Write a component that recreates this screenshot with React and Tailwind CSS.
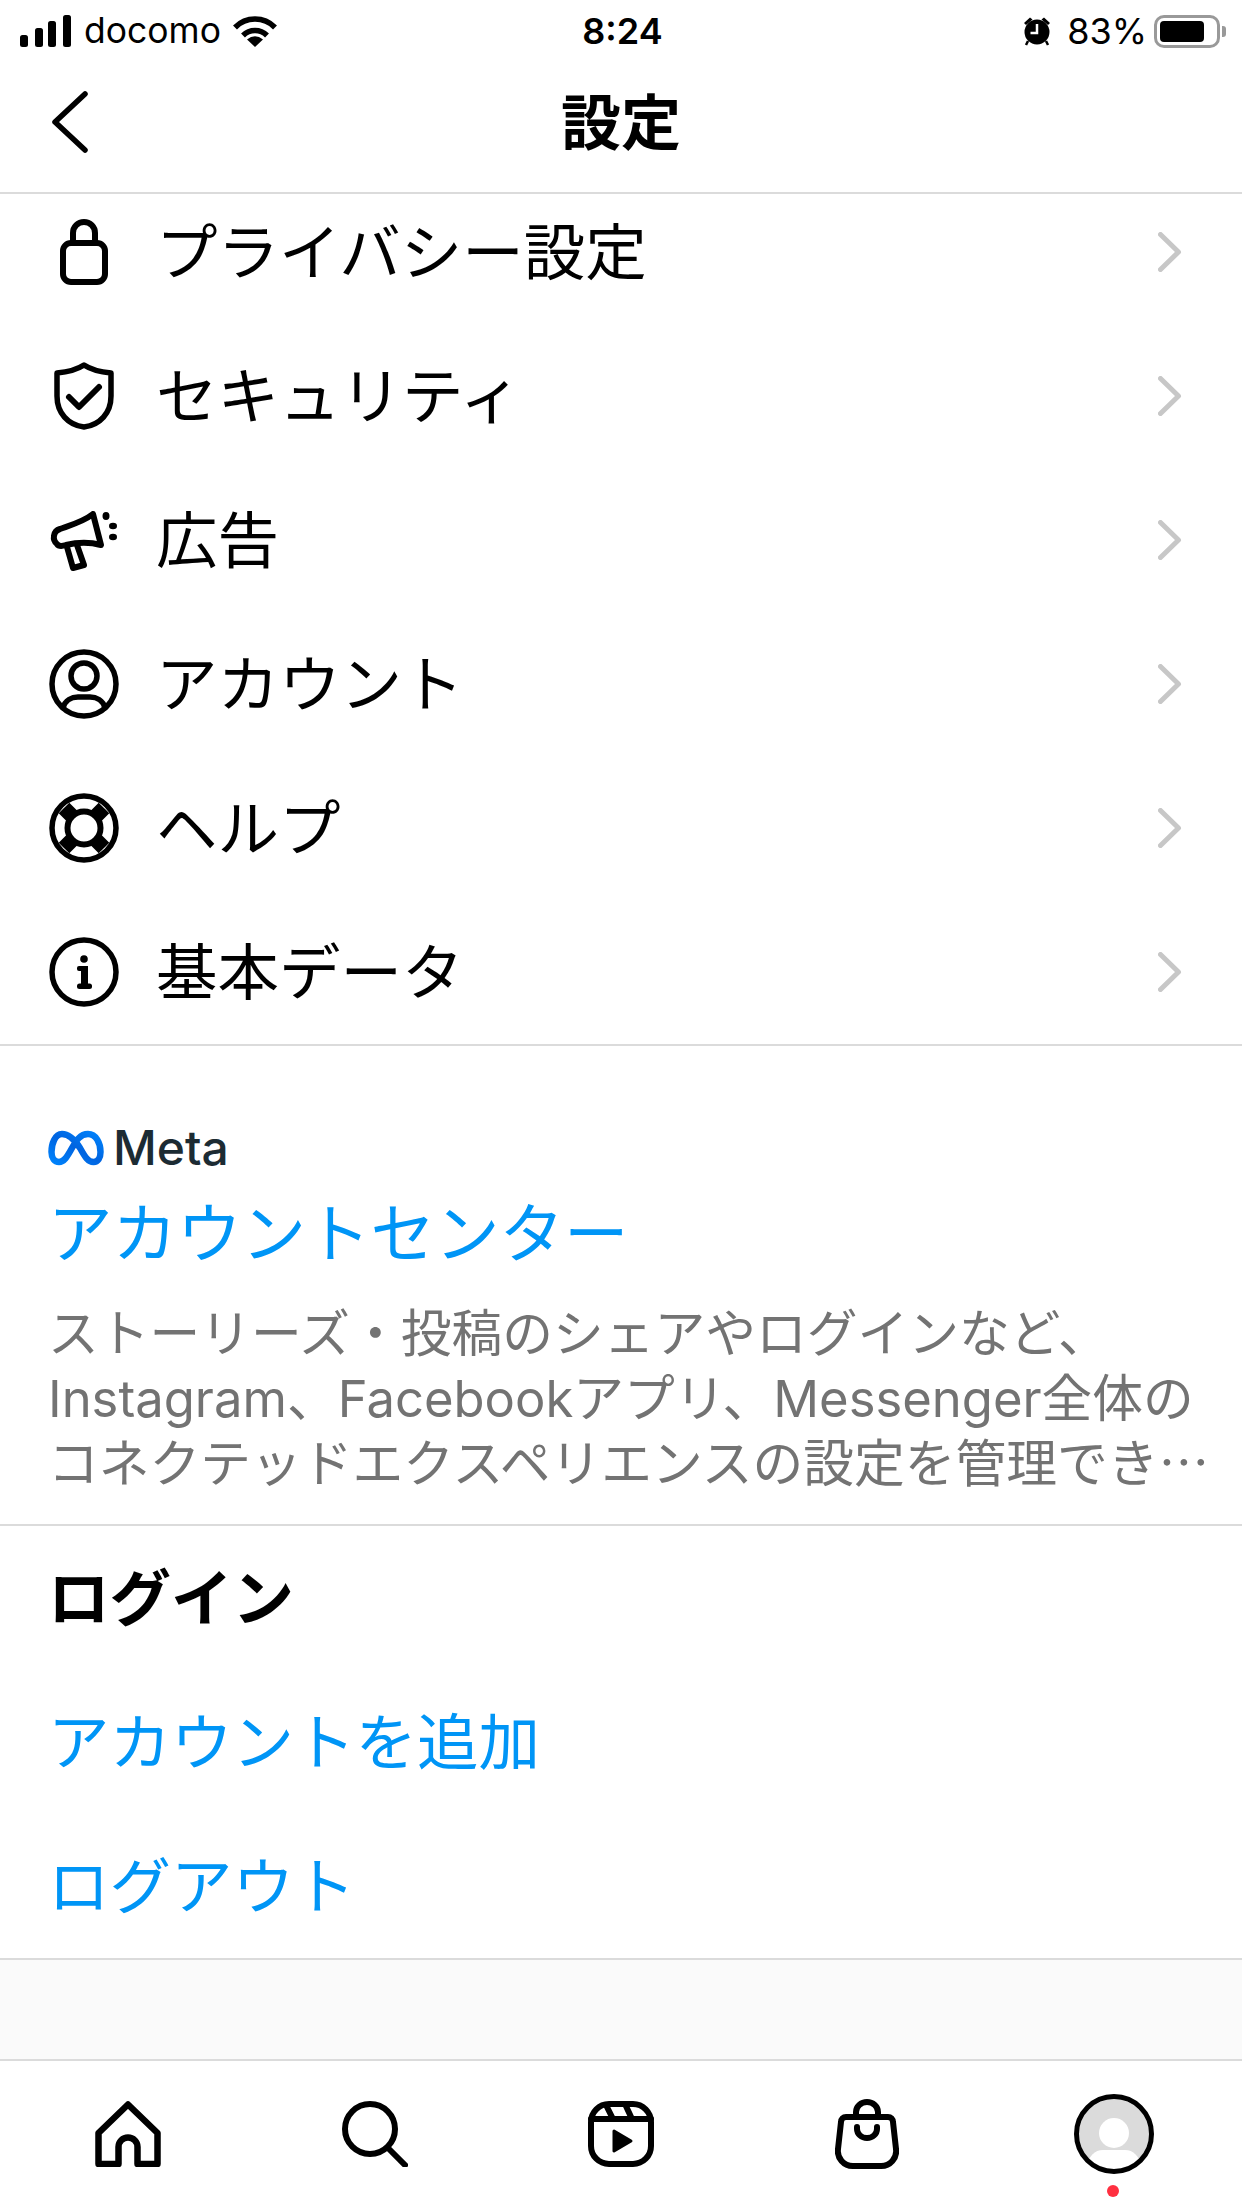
const Stroke = ({ size = 72, h, children, sw = 5.5 }) => (
  <svg width={size} height={h || size} viewBox={`0 0 ${size} ${h || size}`} fill="none" stroke="#000" strokeWidth={sw} strokeLinecap="round" strokeLinejoin="round">
    {children}
  </svg>
);

const LockIcon = () => (
  <Stroke sw={6}>
    <rect x="15" y="27" width="42" height="39" rx="8" />
    <path d="M25 27V17a11 11 0 0 1 22 0V27" />
  </Stroke>
);
const ShieldIcon = () => (
  <Stroke>
    <path d="M36 5C42 9 52 12 63 13V36C63 53 52 65 36 67C20 65 9 53 9 36V13C20 12 30 9 36 5Z" />
    <path d="M21 37L31 47L51 27" strokeWidth="6" />
  </Stroke>
);
const AdIcon = () => (
  <Stroke sw={6}>
    <path d="M45 10C35 18 20 22 12 25C5 27 4 36 9 40C11 43 15 42 18 41C30 38 42 38 53 41Z" />
    <path d="M19 43L25 64L36 61L29 41" />
    <g fill="#000" stroke="none">
      <ellipse cx="58" cy="12" rx="3.5" ry="4" />
      <ellipse cx="65" cy="22" rx="4" ry="3.2" />
      <ellipse cx="65" cy="33" rx="4" ry="3.2" />
    </g>
  </Stroke>
);
const AccountIcon = () => (
  <Stroke>
    <circle cx="36" cy="36" r="32" />
    <circle cx="36" cy="28" r="13" />
    <path d="M15 60C17 52 24 49 30 49H42C48 49 55 52 57 60" />
  </Stroke>
);
const HelpIcon = () => (
  <Stroke>
    <circle cx="36" cy="36" r="32" />
    <path d="M16 16L56 56M56 16L16 56" strokeWidth="15" strokeLinecap="butt" />
    <circle cx="36" cy="36" r="16.5" fill="#fff" strokeWidth="6" />
  </Stroke>
);
const InfoIcon = () => (
  <Stroke>
    <circle cx="36" cy="36" r="32" />
    <g fill="#000" stroke="none">
      <circle cx="36" cy="23" r="3.8" />
      <rect x="29" y="30" width="11" height="5" rx="2" />
      <rect x="33" y="30" width="7" height="22" />
      <rect x="29" y="47.5" width="15" height="5.5" rx="2.5" />
    </g>
  </Stroke>
);

const Chevron = () => (
  <svg width="24" height="40" viewBox="0 0 24 40" fill="none" stroke="#c7c7c7" strokeWidth="5" strokeLinecap="round" strokeLinejoin="round">
    <path d="M2.5 2.5L20.5 20L2.5 37.5" />
  </svg>
);

const rows = [
  ["プライバシー設定", LockIcon],
  ["セキュリティ", ShieldIcon],
  ["広告", AdIcon],
  ["アカウント", AccountIcon],
  ["ヘルプ", HelpIcon],
  ["基本データ", InfoIcon],
];

const StatusBar = () => (
  <div className="h-[60px] pt-[2px] flex items-center relative text-[36px] leading-none text-black pl-[20px] pr-[16px]" style={{ fontFamily: "Inter, sans-serif" }}>
    <div className="flex items-center flex-1">
      <svg width="52" height="32" viewBox="0 0 52 32" fill="#000">
        <rect x="0" y="20" width="8" height="12" rx="2.5" />
        <rect x="15" y="13" width="8" height="19" rx="2.5" />
        <rect x="28" y="6" width="8" height="26" rx="2.5" />
        <rect x="43" y="0" width="8" height="32" rx="2.5" />
      </svg>
      <span className="ml-[12px] text-[35.5px]">docomo</span>
      <svg className="ml-[11px]" width="46" height="34" viewBox="0 0 46 34" fill="none" stroke="#000" strokeWidth="5.5">
        <path d="M3 13.5A28 28 0 0 1 43 13.5" />
        <path d="M11 21.5A17 17 0 0 1 35 21.5" />
        <path d="M23 33L15 25.5Q23 19 31 25.5Z" fill="#000" stroke="none" />
      </svg>
    </div>
    <span className="font-semibold text-[36px] w-[110px] text-center -ml-[1px]">8:24</span>
    <div className="flex items-center flex-1 justify-end">
      <svg width="30" height="32" viewBox="0 0 30 32" fill="#000">
        <circle cx="15" cy="17" r="12.5" />
        <path d="M2 8L8 2.5L10.5 4.5L4 10Z M28 8L22 2.5L19.5 4.5L26 10Z" />
        <path d="M6 26L4 30M24 26L26 30" stroke="#000" strokeWidth="2.5" />
        <path d="M15 9V18H8.5" stroke="#fff" strokeWidth="2.5" fill="none" />
      </svg>
      <span className="ml-[15px]">83%</span>
      <div className="ml-[7px] w-[66px] h-[33px] rounded-[10px] border-[3px] border-[#999999] p-[3px] flex">
        <div className="w-[44px] bg-black rounded-[4px]" />
      </div>
      <div className="ml-[2px] w-[4px] h-[11px] bg-[#999999] rounded-r-[3px]" />
    </div>
  </div>
);

const NavBar = () => (
  <div className="relative z-10 h-[134px] bg-white border-b-2 border-[#dbdbdb] grid grid-cols-3 items-center pb-[8px]">
    <div className="pl-[51px]">
      <svg className="block" width="38" height="62" viewBox="0 0 38 62" fill="none" stroke="#000" strokeWidth="5.5" strokeLinecap="round" strokeLinejoin="round">
        <path d="M34 3L4 31L34 59" />
      </svg>
    </div>
    <h1 className="text-center text-[60px] leading-none font-bold mb-[6px]">設定</h1>
  </div>
);

const MetaLogo = () => (
  <div className="flex items-center">
    <svg width="56" height="36" viewBox="0 0 56 36" fill="none" strokeWidth="6.5" strokeLinecap="round" strokeLinejoin="round">
      <defs>
        <linearGradient id="metaGrad" x1="0" y1="1" x2="1" y2="0">
          <stop offset="0" stopColor="#0082fb" />
          <stop offset="0.5" stopColor="#0064e0" />
          <stop offset="1" stopColor="#0082fb" />
        </linearGradient>
      </defs>
      <path d="M14 4C7 4 3.5 14 3.5 22C3.5 28 6.5 32 11 32C16 32 19 27 24 18C28 11 32 4 40 4C48 4 52.5 13 52.5 22C52.5 28 50 32 45.5 32C40 32 37 27 32 18C27 10 21 4 14 4Z" stroke="url(#metaGrad)" />
    </svg>
    <span className="ml-[9px] text-[48px] leading-none font-medium text-[#1c2b33]" style={{ fontFamily: "Inter, sans-serif" }}>Meta</span>
  </div>
);

const Tab = ({ children }) => <div className="flex items-center justify-center">{children}</div>;

const BottomBar = () => (
  <div className="relative h-[149px] bg-white border-t-2 border-[#dbdbdb] grid grid-cols-5 items-center px-[5px] pb-[1px]">
    <Tab>
      <Stroke size={66} sw={6.5}>
        <path d="M3.5 32L33 3.5L62.5 32V63H42.5V46a9.5 9.5 0 0 0-19 0V63H3.5Z" />
      </Stroke>
    </Tab>
    <Tab>
      <Stroke size={66} sw={6}>
        <circle cx="28" cy="28" r="25" />
        <path d="M46 47L63 64" />
      </Stroke>
    </Tab>
    <Tab>
      <Stroke size={66} sw={6}>
        <rect x="3" y="3" width="60" height="60" rx="18" />
        <path d="M3 18H63" />
        <path d="M18 4L25 18M37 3L44 18" strokeLinecap="butt" />
        <path d="M26 30L43 40L26 50Z" fill="#000" strokeWidth="3" />
      </Stroke>
    </Tab>
    <Tab>
      <Stroke size={64} h={70} sw={6}>
        <path d="M11 18H53A5 5 0 0 1 58 23L61 50A15 15 0 0 1 46 67H18A15 15 0 0 1 3 50L6 23A5 5 0 0 1 11 18Z" />
        <path d="M21 18V13a11 10 0 0 1 22 0V18" />
        <path d="M22 28V30a10 9 0 0 0 20 0V28" />
      </Stroke>
    </Tab>
    <Tab>
      <div className="relative w-[80px] h-[80px]">
        <svg width="80" height="80" viewBox="0 0 80 80">
          <defs>
            <clipPath id="avatarClip"><circle cx="40" cy="40" r="35" /></clipPath>
          </defs>
          <g clipPath="url(#avatarClip)">
            <rect width="80" height="80" fill="#dbdbdb" />
            <circle cx="40" cy="39" r="15" fill="#fff" />
            <rect x="14" y="56" width="52" height="30" rx="15" fill="#fff" />
          </g>
          <circle cx="40" cy="40" r="37.5" fill="none" stroke="#000" strokeWidth="5" />
        </svg>
        <div className="absolute left-[33px] top-[91px] w-[12px] h-[12px] rounded-full bg-[#ff3040]" />
      </div>
    </Tab>
  </div>
);

export default function App() {
  return (
    <div className="w-[1242px] h-[2208px] bg-white text-black flex flex-col overflow-hidden" style={{ fontFamily: '"Noto Sans CJK JP", sans-serif' }}>
      <StatusBar />
      <NavBar />
      <main className="flex-1 flex flex-col overflow-hidden bg-[#fafafa]">
        <section className="-mt-[14px] bg-white border-b-2 border-[#dbdbdb]">
          {rows.map(([label, Icon]) => (
            <div key={label} className="h-[144px] pl-[48px] pr-[60px] flex items-center">
              <Icon />
              <span className="ml-[36px] mb-[6px] text-[61.5px] leading-none">{label}</span>
              <span className="ml-auto"><Chevron /></span>
            </div>
          ))}
        </section>
        <section className="h-[480px] bg-white border-b-2 border-[#dbdbdb] pl-[48px] pt-[78px]">
          <MetaLogo />
          <div className="mt-[19px] text-[64.5px] leading-[76px] text-[#0095f6]">アカウントセンター</div>
          <p className="mt-[34px] text-[50.75px] leading-[65px] text-[#737373] whitespace-nowrap" style={{ fontFamily: 'Inter, "Noto Sans CJK JP", sans-serif' }}>
            ストーリーズ・投稿のシェアやログインなど、
            <br />
            Instagram、Facebookアプリ、Messenger全体の
            <br />
            コネクテッドエクスペリエンスの設定を管理でき⋯
          </p>
        </section>
        <section className="bg-white border-b-2 border-[#dbdbdb] pl-[48px]">
          <div className="h-[144px] pb-[6px] flex items-center text-[61.5px] font-bold leading-none">ログイン</div>
          <div className="h-[144px] pb-[6px] flex items-center text-[61.5px] leading-none text-[#0095f6]">アカウントを追加</div>
          <div className="h-[144px] pb-[6px] flex items-center text-[61.5px] leading-none text-[#0095f6]">ログアウト</div>
        </section>
      </main>
      <BottomBar />
    </div>
  );
}
